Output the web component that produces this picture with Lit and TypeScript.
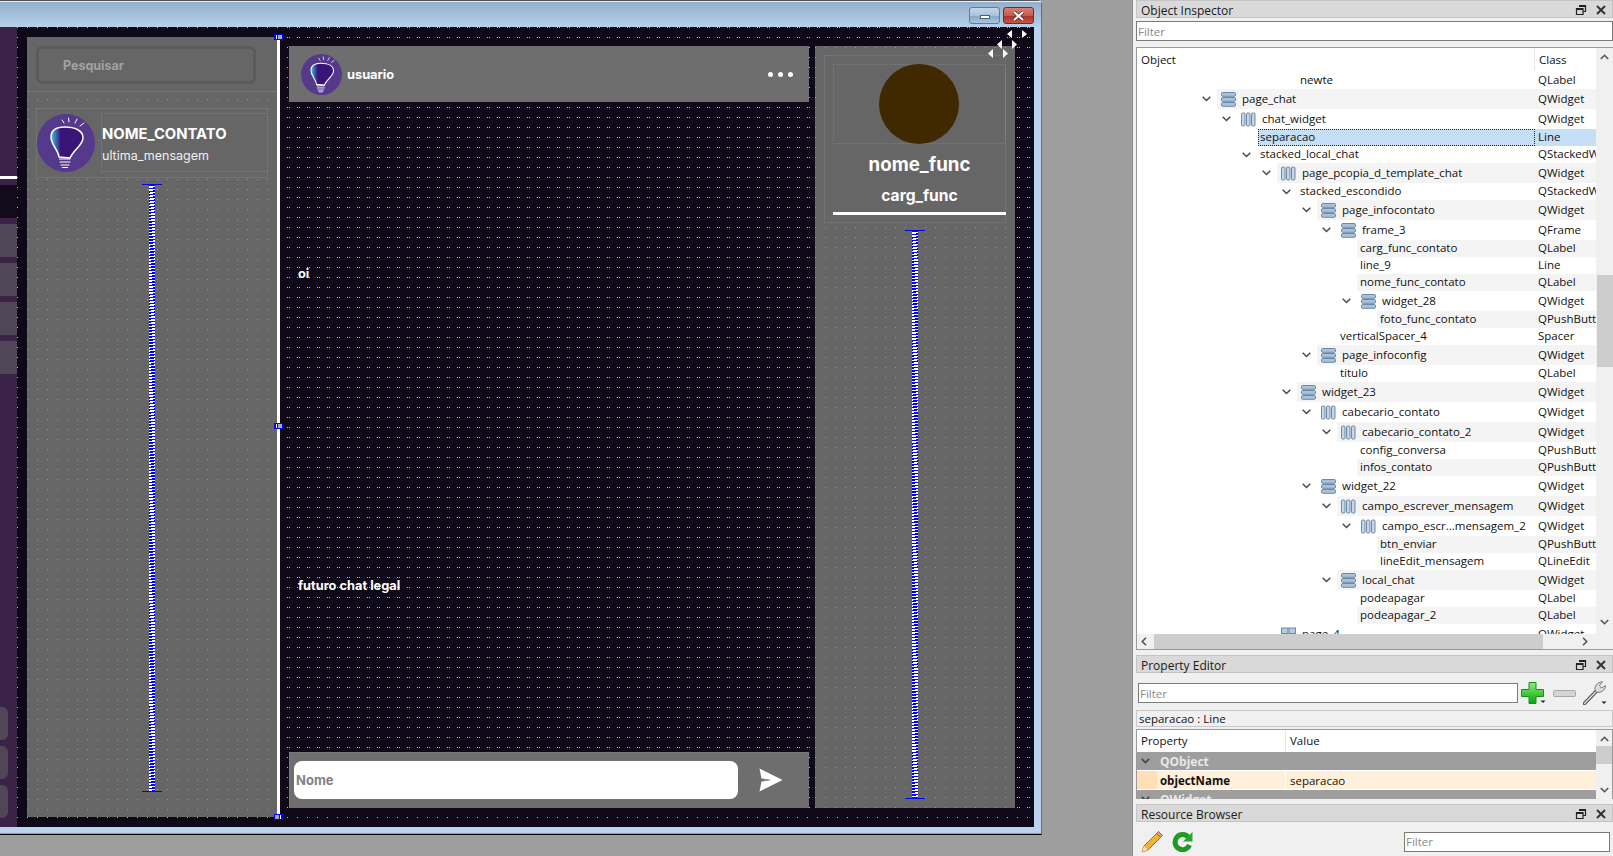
import { LitElement, html, css, svg } from "lit";
import { customElement } from "lit/decorators.js";

type Icon = "rows" | "cols" | "grid" | "";
// nivel, nome, classe, icone, tem seta
type Row = [number, string, string, Icon, boolean];

const ROWS: Row[] = [
  [4, "newte", "QLabel", "", false],
  [0, "page_chat", "QWidget", "rows", true],
  [1, "chat_widget", "QWidget", "cols", true],
  [2, "separacao", "Line", "", false],
  [2, "stacked_local_chat", "QStackedWidget", "", true],
  [3, "page_pcopia_d_template_chat", "QWidget", "cols", true],
  [4, "stacked_escondido", "QStackedWidget", "", true],
  [5, "page_infocontato", "QWidget", "rows", true],
  [6, "frame_3", "QFrame", "rows", true],
  [7, "carg_func_contato", "QLabel", "", false],
  [7, "line_9", "Line", "", false],
  [7, "nome_func_contato", "QLabel", "", false],
  [7, "widget_28", "QWidget", "rows", true],
  [8, "foto_func_contato", "QPushButton", "", false],
  [6, "verticalSpacer_4", "Spacer", "", false],
  [5, "page_infoconfig", "QWidget", "rows", true],
  [6, "titulo", "QLabel", "", false],
  [4, "widget_23", "QWidget", "rows", true],
  [5, "cabecario_contato", "QWidget", "cols", true],
  [6, "cabecario_contato_2", "QWidget", "cols", true],
  [7, "config_conversa", "QPushButton", "", false],
  [7, "infos_contato", "QPushButton", "", false],
  [5, "widget_22", "QWidget", "rows", true],
  [6, "campo_escrever_mensagem", "QWidget", "cols", true],
  [7, "campo_escr...mensagem_2", "QWidget", "cols", true],
  [8, "btn_enviar", "QPushButton", "", false],
  [8, "lineEdit_mensagem", "QLineEdit", "", false],
  [6, "local_chat", "QWidget", "rows", true],
  [7, "podeapagar", "QLabel", "", false],
  [7, "podeapagar_2", "QLabel", "", false],
  [3, "page_4", "QWidget", "grid", false],
];

const bulb = (size: number) => html`
  <svg class="bulb" width=${size} height=${size} viewBox="0 0 58 58">
    <defs>
      <linearGradient id="bg" x1="0" x2="1" y1="0" y2="0">
        <stop offset="0.04" stop-color="#3fb6c4" />
        <stop offset="0.16" stop-color="#3a68b4" />
        <stop offset="0.3" stop-color="#3a1578" />
      </linearGradient>
    </defs>
    <circle cx="29" cy="29" r="29" fill="#553a8b" />
    <path
      d="M22 43C21 35 14 31 14 23C14 16 20 13 28 13C37 13 46 16 46 24C46 31 37 35 33 44Z"
      fill="url(#bg)" stroke="#fff" stroke-width="1.500" stroke-linejoin="round"
    />
    <path d="M22.500 45H33M23 48H33M24 51H32M25.500 53.500H30.500" stroke="#fff" stroke-width="1.200" stroke-linecap="round" />
    <path d="M27 9L25 6M32 8L31.500 4M38 9L40 5M43 12L47 9" stroke="#fff" stroke-width="1" stroke-linecap="round" />
  </svg>
`;

const layoutIcon = (kind: Icon) => {
  if (kind === "cols") {
    return html`<svg class="ico" width="15" height="15" viewBox="0 0 15 15">
      ${[0.5, 5.5, 10.5].map(
        (x) => svg`<rect x=${x} y="1" width="3.5" height="13" rx="1.2" fill="#c4d6e8" stroke="#6f88a3" />`
      )}
    </svg>`;
  }
  if (kind === "grid") {
    return html`<svg class="ico" width="15" height="15" viewBox="0 0 15 15">
      ${[1, 8].map((y) =>
        [0.5, 8].map(
          (x) => svg`<rect x=${x} y=${y} width="6.500" height="5.500" fill="#b4cbe0" stroke="#6f88a3" />`
        )
      )}
    </svg>`;
  }
  return html`<svg class="ico" width="15" height="15" viewBox="0 0 15 15">
    ${[0.5, 5.5, 10.5].map(
      (y) => svg`<rect x="0.5" y=${y} width="14" height="3.8" rx="1.2" fill="#a9c2dc" stroke="#6f88a3" />`
    )}
  </svg>`;
};

const chevron = html`<svg class="chev" width="9" height="6" viewBox="0 0 9 6">
  <path d="M0.700 0.700L4.500 4.500L8.300 0.700" fill="none" stroke="#4a4a4a" stroke-width="1.500" />
</svg>`;

const dockButtons = html`
  <span class="dock-btns">
    <svg width="12" height="12" viewBox="0 0 12 12">
      <path d="M4 1.500H10.500V7.500H8M1.500 4.500H8V10.500H1.500Z" fill="none" stroke="#222" stroke-width="1.200" />
      <path d="M4 2.200H10.500M1.500 5.200H8" stroke="#222" stroke-width="1.400" />
    </svg>
    <svg width="10" height="10" viewBox="0 0 10 10">
      <path d="M1 1L9 9M9 1L1 9" stroke="#333" stroke-width="2" />
    </svg>
  </span>
`;

const arrow = (d: string) => html`<svg class="sb-arrow" width="9" height="6" viewBox="0 0 9 6">
  <path d=${d} fill="none" stroke="#555" stroke-width="1.600" />
</svg>`;

@customElement("app-root")
export class AppRoot extends LitElement {
  static styles = css`
    :host {
      display: block;
      width: 1613px;
      height: 856px;
      overflow: hidden;
      background: #9e9e9e;
    }

    .desk {
      display: flex;
      height: 856px;
    }

    /* janela do preview */
    .window {
      width: 1042px;
      height: 835px;
      box-sizing: border-box;
      display: flex;
      flex-direction: column;
      background: #b9d3ec;
      border-top: 1px solid #555;
      border-right: 1px solid #3d7d95;
      border-bottom: 1px solid #000;
      border-top-right-radius: 5px;
      box-shadow: inset 0 -1px 0 #35bcd8;
      font-family: Inter, "Liberation Sans", sans-serif;
      flex-shrink: 0;
    }
    .titlebar {
      height: 26px;
      flex-shrink: 0;
      box-sizing: border-box;
      border-top: 1px solid #e8eef4;
      background: linear-gradient(#93afcc, #b6d0e9);
      display: flex;
      justify-content: flex-end;
      align-items: flex-start;
      gap: 3px;
      padding: 5px 7px 0 0;
    }
    .win-btn {
      box-sizing: border-box;
      width: 31px;
      height: 17px;
      border-radius: 3px;
      display: flex;
      align-items: center;
      justify-content: center;
    }
    .win-btn.min {
      border: 1px solid #5f7b9a;
      background: linear-gradient(#c4d6e8 0, #a9c3dc 50%, #86a7c9 51%, #a8c4de 100%);
    }
    .win-btn.min i {
      width: 10px;
      height: 4px;
      margin-top: 3px;
      box-sizing: border-box;
      background: #fff;
      border: 1px solid #4a5d72;
    }
    .win-btn.close {
      border: 1px solid #6b2b2b;
      background: linear-gradient(#d88070 0, #c65a4a 50%, #ac2f26 51%, #c0574a 100%);
    }

    .body {
      height: 800px;
      flex-shrink: 0;
      display: flex;
      margin-right: 7px;
      padding-bottom: 10px;
      box-sizing: border-box;
      background:
        conic-gradient(from 0deg at 1px 1px, transparent 75%, #bcbcbc 0) 7px 0 / 10px 10px,
        #0e0818;
    }

    .sidebar {
      width: 17px;
      margin-bottom: -10px;
      margin-right: 10px;
      flex-shrink: 0;
      background: #3b2347;
      display: flex;
      flex-direction: column;
      gap: 6px;
      padding-bottom: 9px;
      box-sizing: border-box;
    }
    .side-top {
      height: 149px;
      margin-bottom: -6px;
    }
    .side-line {
      height: 3px;
      background: #fff;
    }
    .side-dark {
      height: 33px;
      background: #120c1a;
    }
    .side-item {
      height: 33px;
      background: #504658;
    }
    .side-fill {
      flex: 1;
    }
    .side-small {
      height: 33px;
      width: 8px;
      background: #504658;
      border-radius: 0 6px 6px 0;
    }

    /* painel de contatos */
    .contacts {
      width: 250px;
      margin-top: 10px;
      flex-shrink: 0;
      box-sizing: border-box;
      background:
        conic-gradient(from 0deg at 1px 1px, transparent 75%, #989898 0) 0 2px / 10px 10px,
        #666;
      display: flex;
      flex-direction: column;
      align-items: center;
    }
    .search-wrap {
      align-self: stretch;
      height: 55px;
      background: #666;
      padding: 9px 0 0 9px;
      box-sizing: border-box;
      border-bottom: 1px dotted #808080;
    }
    .search {
      display: block;
      width: 220px;
      height: 38px;
      box-sizing: border-box;
      background: #666;
      border: 3px solid #5b5b5b;
      border-radius: 6px;
      outline: none;
      padding: 0 0 0 24px;
      font: 700 12.500px Inter, "Liberation Sans", sans-serif;
    }
    .search::placeholder {
      color: #a2a2a2;
      opacity: 1;
    }
    .contact {
      align-self: stretch;
      margin: 16px 9px 0 9px;
      height: 70px;
      box-sizing: border-box;
      border: 1px dotted #808080;
      display: flex;
      align-items: center;
      gap: 6px;
      background: #666;
    }
    .contact-text {
      flex: 1;
      align-self: stretch;
      margin: 4px 0 5px;
      border: 1px dotted #7c7c7c;
      border-right: 0;
      display: flex;
      flex-direction: column;
      box-sizing: border-box;
    }
    .contact-name {
      color: #fff;
      font-weight: 700;
      font-size: 14.800px;
      line-height: 20px;
      margin-top: 10px;
    }
    .contact-msg {
      color: #f0f0f0;
      font-size: 12.500px;
      line-height: 18px;
      margin-top: 3px;
    }

    .spacer {
      width: 20px;
      display: flex;
      flex-direction: column;
      align-items: center;
      border-top: 1px solid #00f;
      border-bottom: 1px solid #00f;
      box-sizing: border-box;
    }
    .spacer i {
      display: block;
      flex: 1;
      width: 6px;
      background: repeating-linear-gradient(172deg, #00f 0 1.5px, #fff 1.5px 3px);
    }
    .spacer.left {
      height: 608px;
      margin-top: 6px;
    }
    .spacer.right {
      height: 569px;
      margin-top: 7px;
    }

    .separator {
      width: 3px;
      margin-top: 10px;
      flex-shrink: 0;
      background: #fff;
      position: relative;
      display: block;
    }
    .handle {
      position: absolute;
      left: -3px;
      width: 9px;
      height: 6px;
      box-sizing: border-box;
      border: 1px solid #00f;
      background: linear-gradient(90deg, #00f 0 1px, #fff 1px 2px, #00f 2px 3px, #a8a8c8 3px);
    }
    .handle.top {
      top: -3px;
    }
    .handle.mid {
      top: 386px;
    }
    .handle.bottom {
      bottom: -3px;
      background: linear-gradient(270deg, #00f 0 1px, #fff 1px 2px, #00f 2px 3px, #a8a8a8 3px);
    }

    /* area do chat e info */
    .main {
      flex: 1;
      display: flex;
      gap: 6px;
      padding: 19px 19px 9px 9px;
      box-sizing: border-box;
      background: conic-gradient(from 0deg at 1px 1px, transparent 75%, #bcbcbc 0) 9px 0 / 10px 10px;
      position: relative;
    }
    .resize {
      position: absolute;
      top: 3px;
      right: 6px;
    }
    .chat {
      width: 520px;
      display: flex;
      flex-direction: column;
    }
    .chat-head {
      height: 56px;
      flex-shrink: 0;
      background: #6e6e6e;
      display: flex;
      align-items: center;
      padding: 0 16px 0 12px;
    }
    .chat-user {
      color: #fff;
      font-weight: 700;
      font-size: 12.800px;
      margin-left: 5px;
      flex: 1;
    }
    .dots {
      display: flex;
      gap: 5px;
    }
    .dots i {
      width: 5px;
      height: 5px;
      border-radius: 50%;
      background: #fff;
    }
    .messages {
      flex: 1;
      padding: 164px 0 0 9px;
      display: flex;
      flex-direction: column;
      gap: 296px;
    }
    .messages span {
      color: #fff;
      font-weight: 700;
      font-size: 12.800px;
      line-height: 16px;
    }
    .chat-input {
      height: 56px;
      flex-shrink: 0;
      box-sizing: border-box;
      background: #6e6e6e;
      border-top: 1px dotted #828282;
      border-left: 1px dotted #828282;
      display: flex;
      align-items: center;
      padding: 0 0 1px 4px;
      gap: 21px;
    }
    .msg-input {
      width: 444px;
      height: 38px;
      border: 0;
      outline: none;
      box-sizing: border-box;
      border-radius: 8px;
      background: #fff;
      padding: 0 0 0 2px;
      font: 700 13px Inter, "Liberation Sans", sans-serif;
    }
    .msg-input::placeholder {
      color: #7f8387;
      opacity: 1;
    }

    .info {
      width: 200px;
      background:
        conic-gradient(from 0deg at 1px 1px, transparent 75%, #989898 0) 0 1px / 10px 10px,
        #666;
      display: flex;
      flex-direction: column;
      align-items: center;
      padding-top: 9px;
      box-sizing: border-box;
    }
    .info-frame {
      width: 182px;
      height: 168px;
      box-sizing: border-box;
      padding: 8px 0 0 9px;
      border: 1px dotted #7c7c7c;
      background: #666;
      display: flex;
      flex-direction: column;
      align-items: center;
    }
    .photo-frame {
      width: 173px;
      height: 80px;
      box-sizing: border-box;
      border: 1px dotted #7c7c7c;
      display: flex;
      justify-content: center;
      flex-shrink: 0;
    }
    .photo {
      width: 80px;
      height: 80px;
      margin: -1px 0 0 -1px;
      border-radius: 50%;
      background: #402800;
      flex-shrink: 0;
    }
    .func-name {
      color: #fff;
      font-weight: 700;
      font-size: 18.700px;
      line-height: 24px;
      margin-top: 9px;
    }
    .func-role {
      color: #fff;
      font-weight: 700;
      font-size: 15.600px;
      line-height: 20px;
      margin-top: 9px;
    }
    .func-line {
      width: 173px;
      height: 3px;
      background: #fff;
      margin-top: 6px;
      flex-shrink: 0;
    }

    .gap {
      width: 90px;
      flex-shrink: 0;
    }

    /* paineis do Qt Designer */
    .docks {
      flex: 1;
      background: #f0f0f0;
      border-left: 1px solid #8c8c8c;
      display: flex;
      flex-direction: column;
      padding-left: 3px;
      box-sizing: border-box;
      height: 856px;
      font-family: "Open Sans", "Liberation Sans", sans-serif;
      font-size: 11.500px;
      color: #111;
      overflow: hidden;
      min-width: 0;
    }
    .dock-title {
      height: 18px;
      flex-shrink: 0;
      box-sizing: border-box;
      background: #d9d9d9;
      border: 1px solid #c4c4c4;
      display: flex;
      align-items: center;
      justify-content: space-between;
      padding: 2px 6px 0 4px;
      font-size: 12px;
      color: #1a1a1a;
    }
    .dock-btns {
      display: flex;
      align-items: center;
      gap: 9px;
    }
    .filter {
      display: block;
      box-sizing: border-box;
      height: 20px;
      background: #fff;
      border: 1px solid #7a7a7a;
      padding: 0 1px;
      outline: none;
      font-family: "Open Sans", "Liberation Sans", sans-serif;
      font-size: 11.500px;
    }
    .filter::placeholder {
      color: #8a8a8a;
      opacity: 1;
    }
    .filter.wide {
      width: 100%;
      margin: 3px 0 6px;
    }
    .tree {
      height: 603px;
      flex-shrink: 0;
      box-sizing: border-box;
      border: 1px solid #9a9a9a;
      background: #fff;
      display: grid;
      grid-template-columns: 459px 17px;
      grid-template-rows: minmax(0, 1fr) 15px;
    }
    .tree-main {
      grid-column: 1;
      grid-row: 1;
      overflow: hidden;
      min-width: 0;
    }
    .tree-head {
      height: 22px;
      margin-bottom: 2px;
      display: flex;
      align-items: center;
      background: #fff;
    }
    .tree-head .first {
      width: 398px;
      padding-left: 4px;
      box-sizing: border-box;
      height: 100%;
      display: flex;
      align-items: center;
      border-right: 1px solid #e5e5e5;
    }
    .tree-head .second {
      padding-left: 4px;
    }
    .row {
      display: flex;
      height: 17px;
      line-height: 15px;
    }
    .row.has-icon {
      height: 20px;
      line-height: 20px;
    }
    .indent {
      flex-shrink: 0;
      display: flex;
      align-items: center;
      justify-content: flex-end;
      padding-right: 6px;
      box-sizing: border-box;
    }
    .name {
      flex: 1;
      min-width: 0;
      display: flex;
      align-items: center;
      padding: 0 0 2px 3px;
      white-space: nowrap;
      box-sizing: border-box;
    }
    .row.has-icon .name {
      padding: 0 0 0 4px;
    }
    .ico {
      margin-right: 6px;
      flex-shrink: 0;
    }
    .cls {
      width: 61px;
      flex-shrink: 0;
      overflow: hidden;
      white-space: nowrap;
      padding-left: 3px;
      box-sizing: border-box;
    }
    .row.alt .name,
    .row.alt .cls {
      background: #f4f4f4;
    }
    .row.sel .name,
    .row.sel .cls {
      background: #c4dff6;
    }
    .row.sel .name {
      outline: 1px dotted #222;
      outline-offset: -1px;
      padding-left: 2px;
      margin-left: 1px;
    }

    .vbar {
      background: #f0f0f0;
      display: flex;
      flex-direction: column;
      align-items: center;
      min-height: 0;
    }
    .sb-arrow {
      flex-shrink: 0;
    }
    .vbar .thumb {
      width: 16px;
      background: #cdcdcd;
      flex-shrink: 0;
    }
    .vbar .push {
      flex: 1;
    }
    .vbar.tree-bar {
      grid-column: 2;
      grid-row: 1 / 3;
      padding: 6px 0 24px;
      box-sizing: border-box;
    }
    .vbar.tree-bar .thumb {
      height: 92px;
      margin-top: 215px;
    }
    .hbar {
      grid-column: 1;
      grid-row: 2;
      background: #f0f0f0;
      display: flex;
      align-items: center;
      padding: 0 4px;
      box-sizing: border-box;
    }
    .hbar svg {
      flex-shrink: 0;
    }
    .hbar .thumb {
      width: 389px;
      height: 15px;
      background: #cdcdcd;
      margin-left: 7px;
    }
    .hbar .push {
      flex: 1;
    }

    .tools {
      height: 37px;
      display: flex;
      align-items: center;
      padding: 3px 0 0 2px;
      box-sizing: border-box;
      flex-shrink: 0;
    }
    .tools .filter {
      width: 380px;
      margin-right: 3px;
    }
    .tool-plus {
      margin-right: 7px;
    }
    .tool-minus {
      margin-right: 7px;
    }
    .obj-label {
      height: 17px;
      box-sizing: border-box;
      border: 1px solid #c8c8c8;
      line-height: 15px;
      padding-left: 2px;
      flex-shrink: 0;
    }
    .props {
      height: 70px;
      margin-top: 2px;
      flex-shrink: 0;
      box-sizing: border-box;
      border: 1px solid #9a9a9a;
      border-bottom: 0;
      background: #fff;
      display: flex;
      overflow: hidden;
    }
    .props-main {
      width: 459px;
      flex-shrink: 0;
    }
    .p-head,
    .p-row,
    .p-group {
      display: flex;
      align-items: center;
    }
    .p-head {
      height: 22px;
    }
    .p-c1 {
      width: 149px;
      padding: 0 0 2px 4px;
      box-sizing: border-box;
      flex-shrink: 0;
      height: 100%;
      display: flex;
      align-items: center;
      border-right: 1px solid #e5e5e5;
    }
    .p-c2 {
      padding-left: 4px;
    }
    .p-head .p-c2 {
      padding-bottom: 2px;
    }
    .p-group {
      height: 18px;
      margin-bottom: 1px;
      background: #9e9e9e;
      color: #e8e8e8;
      font-weight: 700;
      font-size: 12px;
    }
    .p-group svg {
      margin-left: 4px;
      margin-right: 10px;
    }
    .p-row {
      height: 18px;
      margin-bottom: 1px;
      background: #fff0dc;
    }
    .p-key {
      width: 149px;
      height: 100%;
      flex-shrink: 0;
      display: flex;
      align-items: center;
      font-weight: 700;
      box-sizing: border-box;
      border-right: 1px solid #fff;
    }
    .p-key::before {
      content: "";
      width: 20px;
      height: 100%;
      margin-right: 3px;
      background: #ffdfb8;
    }
    .vbar.prop-bar {
      flex: 1;
      padding-top: 6px;
      box-sizing: border-box;
    }
    .vbar.prop-bar .thumb {
      height: 18px;
      margin-top: 4px;
    }
    .vbar.prop-bar .sb-arrow:last-child {
      margin-bottom: 6px;
    }
    .res-tools {
      display: flex;
      align-items: center;
      padding: 8px 3px 0 5px;
      gap: 8px;
    }
    .res-tools .push {
      flex: 1;
    }
    .res-tools .filter {
      width: 206px;
    }
  `;

  renderRow(row: Row, i: number) {
    const [level, name, cls, icon, arrowed] = row;
    const sel = name === "separacao";
    const classes = ["row", icon ? "has-icon" : "", i % 2 === 1 && !sel ? "alt" : "", sel ? "sel" : ""].join(" ");
    return html`
      <div class=${classes}>
        <span class="indent" style="width:${80 + level * 20}px">${arrowed ? chevron : ""}</span>
        <span class="name">${icon ? layoutIcon(icon) : ""}${name}</span>
        <span class="cls">${cls}</span>
      </div>
    `;
  }

  render() {
    return html`
      <div class="desk">
        <div class="window">
          <div class="titlebar">
            <div class="win-btn min"><i></i></div>
            <div class="win-btn close">
              <svg width="13" height="10" viewBox="0 0 13 10">
                <path d="M2 1L11 9M11 1L2 9" stroke="#4a1a14" stroke-width="3.400" />
                <path d="M2 1L11 9M11 1L2 9" stroke="#fff" stroke-width="2.200" />
              </svg>
            </div>
          </div>
          <div class="body">
            <div class="sidebar">
              <div class="side-top"></div>
              <div class="side-line"></div>
              <div class="side-dark"></div>
              <div class="side-item"></div>
              <div class="side-item"></div>
              <div class="side-item"></div>
              <div class="side-item"></div>
              <div class="side-fill"></div>
              <div class="side-small"></div>
              <div class="side-small"></div>
              <div class="side-small"></div>
            </div>

            <div class="contacts">
              <div class="search-wrap">
                <input class="search" placeholder="Pesquisar" />
              </div>
              <div class="contact">
                ${bulb(58)}
                <div class="contact-text">
                  <span class="contact-name">NOME_CONTATO</span>
                  <span class="contact-msg">ultima_mensagem</span>
                </div>
              </div>
              <div class="spacer left"><i></i></div>
            </div>

            <div class="separator">
              <span class="handle top"></span>
              <span class="handle mid"></span>
              <span class="handle bottom"></span>
            </div>

            <div class="main">
              <svg class="resize" width="40" height="28" viewBox="0 0 40 28">
                <path fill="#fff" d="M24 0L19 4L24 8ZM34 0L39 4L34 8ZM14 10L9 14.500L14 19ZM24 10L29 14.500L24 19ZM5 19L0 23.500L5 28ZM15 19L20 23.500L15 28Z" />
              </svg>
              <div class="chat">
                <div class="chat-head">
                  ${bulb(41)}
                  <span class="chat-user">usuario</span>
                  <span class="dots"><i></i><i></i><i></i></span>
                </div>
                <div class="messages">
                  <span>oi</span>
                  <span>futuro chat legal</span>
                </div>
                <div class="chat-input">
                  <input class="msg-input" placeholder="Nome" />
                  <svg width="24" height="24" viewBox="0 0 24 24">
                    <path d="M0.500 0.500L23.500 12L0.500 23.500L2.500 13.500L12 12L2.500 10.500Z" fill="#fff" />
                    <path d="M2.500 10.500L12 12L2.500 13.500L6 12Z" fill="#8f8f8f" />
                  </svg>
                </div>
              </div>
              <div class="info">
                <div class="info-frame">
                  <div class="photo-frame"><div class="photo"></div></div>
                  <span class="func-name">nome_func</span>
                  <span class="func-role">carg_func</span>
                  <div class="func-line"></div>
                </div>
                <div class="spacer right"><i></i></div>
              </div>
            </div>
          </div>
        </div>

        <div class="gap"></div>

        <div class="docks">
          <div class="dock-title"><span>Object Inspector</span>${dockButtons}</div>
          <input class="filter wide" placeholder="Filter" />
          <div class="tree">
            <div class="tree-main">
              <div class="tree-head">
                <span class="first">Object</span>
                <span class="second">Class</span>
              </div>
              ${ROWS.map((r, i) => this.renderRow(r, i))}
            </div>
            <div class="vbar tree-bar">
              ${arrow("M0.800 5L4.500 1.300L8.200 5")}
              <div class="thumb"></div>
              <div class="push"></div>
              ${arrow("M0.800 1L4.500 4.700L8.200 1")}
            </div>
            <div class="hbar">
              <svg width="6" height="9" viewBox="0 0 6 9"><path d="M5 0.800L1.300 4.500L5 8.200" fill="none" stroke="#555" stroke-width="1.600" /></svg>
              <div class="thumb"></div>
              <div class="push"></div>
              <svg width="6" height="9" viewBox="0 0 6 9"><path d="M1 0.800L4.700 4.500L1 8.200" fill="none" stroke="#555" stroke-width="1.600" /></svg>
              <span style="width:4px"></span>
            </div>
          </div>

          <div class="dock-title" style="margin-top:5px"><span>Property Editor</span>${dockButtons}</div>
          <div class="tools">
            <input class="filter" placeholder="Filter" />
            <svg class="tool-plus" width="25" height="22" viewBox="0 0 25 22">
              <defs>
                <linearGradient id="gp" x1="0" x2="0" y1="0" y2="1">
                  <stop offset="0" stop-color="#8af07a" />
                  <stop offset="1" stop-color="#0aa30a" />
                </linearGradient>
              </defs>
              <path d="M8 0.500H15V7.500H22.500V14.500H15V21.500H8V14.500H0.500V7.500H8Z" fill="url(#gp)" stroke="#1a8f1a" />
              <path d="M19.500 18.500H24.500L22 21Z" fill="#222" />
            </svg>
            <svg class="tool-minus" width="23" height="7" viewBox="0 0 23 7">
              <rect x="0.500" y="0.500" width="22" height="6" rx="1" fill="#d4d4d4" stroke="#a8a8a8" />
            </svg>
            <svg width="24" height="24" viewBox="0 0 24 24">
              <path d="M1.500 22.500L14 9.500" stroke="#555" stroke-width="3.600" stroke-linecap="round" />
              <path d="M1.500 22.500L14 9.500" stroke="#ddd" stroke-width="1.400" stroke-linecap="round" />
              <path d="M12.500 10.500C10.500 6 14 1 19.500 0.800L16.500 4.500L18.500 7L22.500 4.500C22.500 9.500 17 13 12.500 10.500Z" fill="#dcdcdc" stroke="#7a7a7a" />
              <path d="M18.500 20.500H23.500L21 23Z" fill="#222" />
            </svg>
          </div>
          <div class="obj-label">separacao : Line</div>
          <div class="props">
            <div class="props-main">
              <div class="p-head">
                <span class="p-c1">Property</span>
                <span class="p-c2">Value</span>
              </div>
              <div class="p-group">
                <svg width="9" height="6" viewBox="0 0 9 6"><path d="M0.800 0.800L4.500 4.500L8.200 0.800" fill="none" stroke="#444" stroke-width="1.700" /></svg>
                QObject
              </div>
              <div class="p-row">
                <span class="p-key">objectName</span>
                <span class="p-c2">separacao</span>
              </div>
              <div class="p-group">
                <svg width="9" height="6" viewBox="0 0 9 6"><path d="M0.800 0.800L4.500 4.500L8.200 0.800" fill="none" stroke="#444" stroke-width="1.700" /></svg>
                QWidget
              </div>
            </div>
            <div class="vbar prop-bar">
              ${arrow("M0.800 5L4.500 1.300L8.200 5")}
              <div class="thumb"></div>
              <div class="push"></div>
              ${arrow("M0.800 1L4.500 4.700L8.200 1")}
            </div>
          </div>

          <div class="dock-title" style="margin-top:5px"><span>Resource Browser</span>${dockButtons}</div>
          <div class="res-tools">
            <svg width="23" height="23" viewBox="0 0 23 23">
              <path d="M17.500 1.500L21.500 5.500L7 20L1 22L3 16Z" fill="#f2b233" stroke="#a86f12" />
              <path d="M17.500 1.500L21.500 5.500L19.500 7.500L15.500 3.500Z" fill="#e89a7a" stroke="#a86f12" />
              <path d="M3 16L7 20L1 22Z" fill="#f0dfbc" />
            </svg>
            <svg width="21" height="21" viewBox="0 0 21 21">
              <path d="M16.500 6.500A7.500 7.500 0 1 0 17.500 14" fill="none" stroke="#1e9a22" stroke-width="5" />
              <path d="M20.500 1V10.500H11Z" fill="#2aa52e" />
            </svg>
            <div class="push"></div>
            <input class="filter" placeholder="Filter" />
          </div>
        </div>
      </div>
    `;
  }
}
